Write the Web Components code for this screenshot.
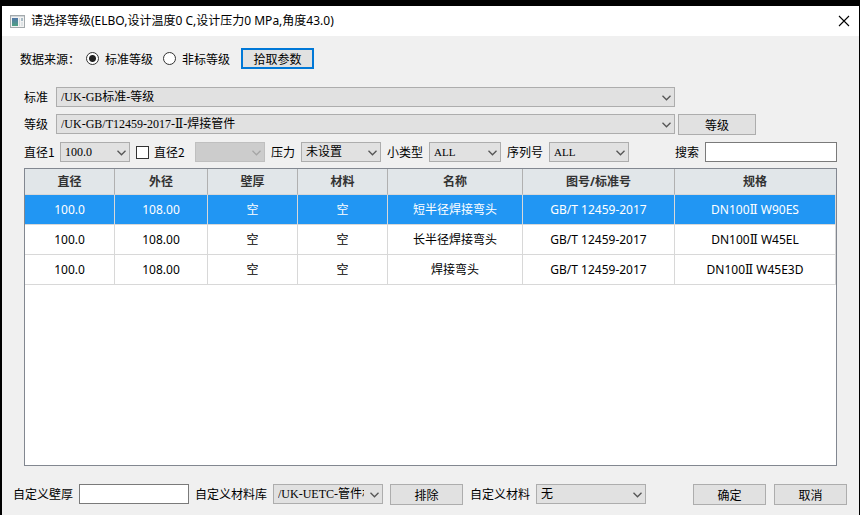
<!DOCTYPE html>
<html lang="zh-CN">
<head>
<meta charset="utf-8">
<meta name="viewport" content="width=device-width, initial-scale=1">
<title>请选择等级</title>
<style>
  html, body { margin: 0; height: 100%; }
  body {
    background: #000;
    color: #000;
    font: 12px/16px "Noto Sans CJK SC", sans-serif;
    --face: #e1e1e1;
    --edge: #adadad;
    --mixed: "Noto Sans", "DejaVu Serif", "Noto Sans CJK SC", sans-serif;
  }
</style>
</head>
<body>
<grade-dialog></grade-dialog>
<script>
let serial = 0;

class UiCombo extends HTMLElement {
  connectedCallback() {
    const id = 'combo-' + (++serial);
    const off = this.hasAttribute('disabled');
    const label = this.getAttribute('label');
    const value = this.getAttribute('value') || '';
    this.attachShadow({ mode: 'open' }).innerHTML = `
      <style>
        :host { display: grid; grid-template-columns: var(--label, auto) minmax(0, 1fr); align-items: center; }
        :host([nolabel]) { grid-template-columns: minmax(0, 1fr); }
        label { white-space: nowrap; }
        .box { display: grid; grid-template-columns: minmax(0, 1fr) 18px; align-items: center; }
        select {
          appearance: none; grid-area: 1 / 1 / 2 / 3; box-sizing: border-box; width: 100%; height: 20px;
          margin: 0; padding: 0 18px 0 4px; border: 1px solid var(--edge); border-radius: 0;
          background: var(--face); color: #000; line-height: 18px; font-size: 12px;
          font-family: "Liberation Serif", "DejaVu Serif", "Noto Sans CJK SC", serif;
        }
        :host([compact]) select { font-size: 11px; }
        select:disabled { background: #ccc; border-color: #bfbfbf; opacity: 1; }
        svg { grid-area: 1 / 2; justify-self: center; width: 9px; height: 6px; margin-top: 1px; pointer-events: none; fill: none; stroke: #555; stroke-width: 1.3; }
        :host([disabled]) svg { stroke: #a5a5a5; }
      </style>
      ${label ? `<label for="${id}">${label}</label>` : ''}
      <div class="box">
        <select id="${id}" ${off ? 'disabled' : ''} aria-label="${label || this.getAttribute('name') || ''}"><option>${value}</option></select>
        <svg viewBox="0 0 9 6"><path d="M.5 .8 4.5 4.8 8.5 .8"/></svg>
      </div>`;
  }
}

class UiText extends HTMLElement {
  connectedCallback() {
    const id = 'text-' + (++serial);
    this.attachShadow({ mode: 'open' }).innerHTML = `
      <style>
        :host { display: grid; grid-template-columns: var(--label, auto) minmax(0, 1fr); align-items: center; }
        label { white-space: nowrap; }
        input { box-sizing: border-box; width: 100%; height: 20px; margin: 0; padding: 0 4px; border: 1px solid #7a7a7a; border-radius: 0; background: #fff; font: inherit; }
      </style>
      <label for="${id}">${this.getAttribute('label')}</label><input id="${id}" type="text">`;
  }
}

class UiButton extends HTMLElement {
  connectedCallback() {
    this.attachShadow({ mode: 'open' }).innerHTML = `
      <style>
        :host { display: block; }
        button { display: block; box-sizing: border-box; width: 100%; height: 21px; margin: 0; padding: 0; border: 1px solid var(--edge); border-radius: 0; background: var(--face); color: #000; font: inherit; line-height: 19px; }
        :host([primary]) button { border: 2px solid #0078d7; line-height: 17px; }
      </style>
      <button type="button"><slot></slot></button>`;
  }
}

class UiSource extends HTMLElement {
  connectedCallback() {
    this.attachShadow({ mode: 'open' }).innerHTML = `
      <style>
        :host { display: block; }
        fieldset { display: flex; align-items: center; margin: 0; padding: 0; border: 0; min-width: 0; }
        .name { width: 66px; }
        label { display: flex; align-items: center; gap: 6px; width: 77px; }
        input { appearance: none; box-sizing: border-box; width: 13px; height: 13px; margin: 0; border: 1px solid #333; border-radius: 50%; background: #fff; }
        input:checked { background: radial-gradient(circle, #222 0 3px, #fff 4px); }
      </style>
      <fieldset aria-label="数据来源">
        <span class="name">数据来源：</span>
        <label><input type="radio" name="src" checked>标准等级</label>
        <label><input type="radio" name="src">非标等级</label>
      </fieldset>`;
  }
}

class UiCheck extends HTMLElement {
  connectedCallback() {
    this.attachShadow({ mode: 'open' }).innerHTML = `
      <style>
        :host { display: block; }
        label { display: flex; align-items: center; gap: 5px; white-space: nowrap; }
        input { appearance: none; box-sizing: border-box; width: 13px; height: 13px; margin: 0; border: 1px solid #333; background: #fff; }
      </style>
      <label><input type="checkbox"><slot></slot></label>`;
  }
}

class TitleBar extends HTMLElement {
  connectedCallback() {
    this.attachShadow({ mode: 'open' }).innerHTML = `
      <style>
        :host { display: flex; align-items: center; height: 30px; padding: 0 8px; background: #fff; font-family: var(--mixed); }
        .app { width: 15px; height: 13px; margin-right: 6px; }
        h1 { flex: 1; margin: 0; font-size: 12px; font-weight: 400; line-height: 16px; white-space: nowrap; }
        button { display: grid; place-items: center; width: 14px; height: 14px; padding: 0; border: 0; background: none; }
        button svg { width: 12px; height: 12px; stroke: #000; stroke-width: 1.1; }
      </style>
      <svg class="app" viewBox="0 0 15 13">
        <defs><linearGradient id="g" x2="0" y2="1"><stop offset="0" stop-color="#5277a8"/><stop offset="1" stop-color="#4fa184"/></linearGradient></defs>
        <rect x=".5" y=".5" width="14" height="12" fill="#f3f3f3" stroke="#a3a9ac"/>
        <rect x="1" y="1" width="13" height="1" fill="#d2d7da"/>
        <rect x="2" y="3" width="6" height="8" fill="url(#g)"/>
        <rect x="9" y="3" width="1" height="8" fill="#d5dade"/>
        <rect x="11" y="3" width="2" height="3" fill="#a9bcc6"/>
        <rect x="11" y="7" width="2" height="4" fill="#dfe4e6"/>
      </svg>
      <h1><slot></slot></h1>
      <button type="button" aria-label="关闭"><svg viewBox="0 0 12 12"><path d="M1 1 11 11M11 1 1 11"/></svg></button>`;
  }
}

class GradeTable extends HTMLElement {
  connectedCallback() {
    const heads = ['直径', '外径', '壁厚', '材料', '名称', '图号/标准号', '规格'];
    const rows = [
      ['100.0', '108.00', '空', '空', '短半径焊接弯头', 'GB/T 12459-2017', 'DN100Ⅱ W90ES'],
      ['100.0', '108.00', '空', '空', '长半径焊接弯头', 'GB/T 12459-2017', 'DN100Ⅱ W45EL'],
      ['100.0', '108.00', '空', '空', '焊接弯头', 'GB/T 12459-2017', 'DN100Ⅱ W45E3D']
    ];
    const widths = [90, 93, 90, 90, 135, 152];
    this.attachShadow({ mode: 'open' }).innerHTML = `
      <style>
        :host { display: block; border: 1px solid #828790; background: #fff; font-family: var(--mixed); overflow: auto; }
        table { width: 100%; table-layout: fixed; border-collapse: separate; border-spacing: 0; }
        th, td { box-sizing: border-box; padding: 0; text-align: center; white-space: nowrap; border: 0 solid #d8d8d8; border-width: 0 1px 1px 0; }
        th { height: 26px; background: #e1e6e9; color: #333; border-right-color: #b0b0b0; font-weight: 700; }
        th:last-child { border-right-color: #e1e6e9; }
        td { height: 30px; }
        tr.on td { background: #2196f3; color: #fff; }
      </style>
      <table>
        <colgroup>${widths.map(w => `<col style="width:${w}px">`).join('')}<col></colgroup>
        <thead><tr>${heads.map(h => `<th scope="col">${h}</th>`).join('')}</tr></thead>
        <tbody>${rows.map((r, i) => `<tr${i ? '' : ' class="on"'}>${r.map(c => `<td>${c}</td>`).join('')}</tr>`).join('')}</tbody>
      </table>`;
  }
}

class GradeDialog extends HTMLElement {
  connectedCallback() {
    this.attachShadow({ mode: 'open' }).innerHTML = `
      <style>
        :host { display: flex; flex-direction: column; box-sizing: border-box; min-height: 100%; padding: 6px 1px 0 2px; }
        main { flex: 1; display: flex; flex-direction: column; background: #f0f0f0; padding: 12px 22px 10px; }
        .row { display: flex; align-items: center; }
        .source { padding-bottom: 18px; margin-left: -4px; gap: 1px; }
        .grades { display: grid; grid-template-columns: minmax(0, 1fr) 78px 78px; column-gap: 3px; row-gap: 7px; align-items: start; --label: 32px; }
        .grades ui-combo { grid-column: 1; }
        .filters { padding: 7px 0 6px; gap: 6px; }
        .push { margin-left: auto; }
        grade-table { flex: 1; }
        .foot { margin: 18px -11px 0; gap: 6px; align-items: flex-start; }
        .foot ui-button { margin-right: 1px; }
        .foot ui-button:not(.push) { margin-left: 1px; }
        .w73 { width: 73px; }
        .w106 { width: 106px; --label: 36px; }
        .w70 { width: 70px; }
        .w110 { width: 110px; --label: 30px; }
        .w114 { width: 114px; --label: 42px; }
        .w122 { width: 122px; --label: 42px; }
        .w162 { width: 162px; --label: 30px; }
        .w176 { width: 176px; --label: 66px; }
        .w188 { width: 188px; --label: 78px; }
        .check { width: 53px; }
      </style>
      <title-bar>请选择等级(ELBO,设计温度0 C,设计压力0 MPa,角度43.0)</title-bar>
      <main>
        <div class="row source">
          <ui-source></ui-source>
          <ui-button class="w73" primary>拾取参数</ui-button>
        </div>
        <div class="grades">
          <ui-combo label="标准" value="/UK-GB标准-等级"></ui-combo>
          <ui-combo label="等级" value="/UK-GB/T12459-2017-Ⅱ-焊接管件"></ui-combo>
          <ui-button>等级</ui-button>
        </div>
        <div class="row filters">
          <ui-combo class="w106" label="直径1" value="100.0"></ui-combo>
          <ui-check class="check">直径2</ui-check>
          <ui-combo class="w70" name="直径2" nolabel disabled></ui-combo>
          <ui-combo class="w110" label="压力" value="未设置"></ui-combo>
          <ui-combo class="w114" label="小类型" value="ALL" compact></ui-combo>
          <ui-combo class="w122" label="序列号" value="ALL" compact></ui-combo>
          <ui-text class="w162 push" label="搜索"></ui-text>
        </div>
        <grade-table></grade-table>
        <div class="row foot">
          <ui-text class="w176" label="自定义壁厚"></ui-text>
          <ui-combo class="w188" label="自定义材料库" value="/UK-UETC-管件材"></ui-combo>
          <ui-button class="w73">排除</ui-button>
          <ui-combo class="w176" label="自定义材料" value="无"></ui-combo>
          <ui-button class="w73 push">确定</ui-button>
          <ui-button class="w73">取消</ui-button>
        </div>
      </main>`;
  }
}

customElements.define('ui-combo', UiCombo);
customElements.define('ui-text', UiText);
customElements.define('ui-button', UiButton);
customElements.define('ui-source', UiSource);
customElements.define('ui-check', UiCheck);
customElements.define('title-bar', TitleBar);
customElements.define('grade-table', GradeTable);
customElements.define('grade-dialog', GradeDialog);
</script>
</body>
</html>
